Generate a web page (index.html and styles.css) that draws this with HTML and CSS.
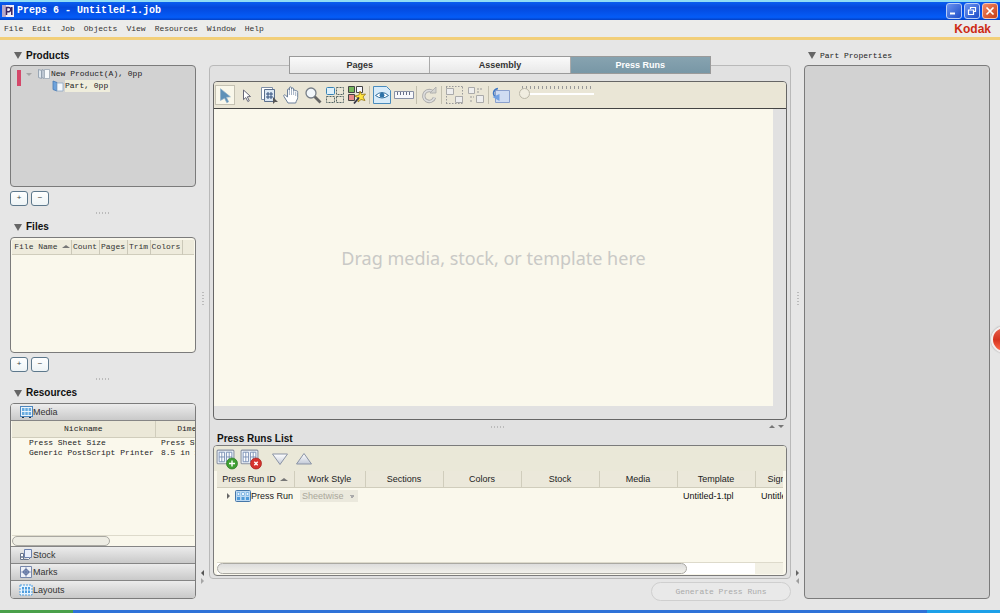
FILE: index.html
```html
<!DOCTYPE html>
<html lang="en">
<head>
<meta charset="utf-8">
<title>Preps 6 - Untitled-1.job</title>
<link rel="stylesheet" href="styles.css">
</head>
<body>
<svg class="defs" aria-hidden="true">
  <defs>
    <linearGradient id="fade" x1="0" y1="0" x2="0" y2="1"><stop offset="0" stop-color="#fff"/><stop offset="1" stop-color="#c3cad8"/></linearGradient>
    <symbol id="sheet" viewBox="0 0 18 16"><rect x="1" y="1" width="16" height="13" rx="1" fill="#e8eef6" stroke="#8a93a3"/><path d="M3 3h5v9H3zM10 3h5v9h-5z" fill="#fff" stroke="#6f87b0" stroke-width=".8"/><path d="M5.500 3v9M12.500 3v9M3 7.500h5M10 7.500h5" stroke="#6f87b0" stroke-width=".8"/></symbol>
    <symbol id="grid" viewBox="0 0 16 12"><rect x=".5" y=".5" width="15" height="11" rx="1" fill="#bcd9f2" stroke="#4677a8"/><path d="M2 2.500h3v3H2zM6.500 2.500h3v3h-3zM11 2.500h3v3h-3zM2 7h3v3H2zM6.500 7h3v3h-3zM11 7h3v3h-3z" fill="#4f9ad8"/><path d="M2.500 3h2v2h-2zM7 3h2v2H7zM11.500 3h2v2h-2z" fill="#eaf5ff"/></symbol>
  </defs>
</svg>
<div class="app">
  <header class="titlebar">
    <svg class="logo" viewBox="0 0 12 12"><rect width="12" height="12" fill="#f4eef8"/><path d="M0 0h4v12H0z" fill="#b9a9c9"/><path d="M4.500 10V2.500h2.200a2 2 0 0 1 0 4.200H5M9.800 2v8" fill="none" stroke="#3a2462" stroke-width="1.500"/></svg>
    <h1 class="title">Preps 6 - Untitled-1.job</h1>
    <div class="winbtns">
      <button class="win" aria-label="Minimize"><svg viewBox="0 0 14 14"><path d="M3 9.500h5" stroke="#fff" stroke-width="2"/></svg></button>
      <button class="win" aria-label="Restore"><svg viewBox="0 0 14 14"><path d="M5.500 5V3.500h5v4H9M3.500 6h5v4.500h-5z" fill="none" stroke="#fff" stroke-width="1.200"/></svg></button>
      <button class="win close" aria-label="Close"><svg viewBox="0 0 14 14"><path d="M3.500 3.500l7 7M10.500 3.500l-7 7" stroke="#fff" stroke-width="1.700"/></svg></button>
    </div>
  </header>
  <nav class="menubar">
    <button>File</button><button>Edit</button><button>Job</button><button>Objects</button><button>View</button><button>Resources</button><button>Window</button><button>Help</button>
    <strong class="brand">Kodak</strong>
  </nav>

  <main class="workspace">
    <aside class="left">
      <h2 class="head">Products</h2>
      <section class="panel gray products">
        <ul class="tree">
          <li><span class="mark"></span><i class="tri down"></i><svg class="i12" viewBox="0 0 14 12"><path d="M1.500 1.500l3 1v8l-3-1zM5 1.500l2 1v8l-2-1z" fill="#dfe7ee" stroke="#8998a8" stroke-width=".8"/><path d="M7.500 1.500h5v9h-5z" fill="#f6f9fb" stroke="#9aa7b5" stroke-width=".8"/></svg>New Product(A), 0pp</li>
          <li class="part"><svg class="i12" viewBox="0 0 14 12"><path d="M2 1l4 1.500V11L2 9.500z" fill="#6ea3dc" stroke="#4579b5" stroke-width=".8"/><path d="M6 3h6v8H6z" fill="#f3f7fc" stroke="#8ea7c2" stroke-width=".8"/></svg><span>Part, 0pp</span></li>
        </ul>
      </section>
      <div class="pm"><button aria-label="Add product">+</button><button aria-label="Remove product">−</button></div>
      <div class="dots"></div>

      <h2 class="head">Files</h2>
      <section class="panel files">
        <table class="filetable">
          <thead><tr><th class="c1">File Name <i class="tri up"></i></th><th>Count</th><th>Pages</th><th>Trim</th><th>Colors</th><th class="rest"></th></tr></thead>
        </table>
      </section>
      <div class="pm"><button aria-label="Add file">+</button><button aria-label="Remove file">−</button></div>
      <div class="dots"></div>

      <h2 class="head">Resources</h2>
      <section class="panel resources">
        <button class="acc"><svg class="i12" viewBox="0 0 14 12"><rect x="1.500" y=".5" width="12" height="10" fill="#eaf4fc" stroke="#4e86bd"/><path d="M3 2h2.500v3H3zM6.300 2h2.500v3H6.300zM9.600 2h2.500v3H9.600zM3 6h2.500v3H3zM6.300 6h2.500v3H6.300zM9.600 6h2.500v3H9.600z" fill="#67abe0"/><path d="M3 11.500h2M10 11.500h2" stroke="#234"/></svg>Media</button>
        <div class="media">
          <table class="mediatable">
            <thead><tr><th>Nickname</th><th>Dimensions</th></tr></thead>
            <tbody><tr><td>Press Sheet Size</td><td>Press Sheet</td></tr><tr><td>Generic PostScript Printer</td><td>8.5 in x 11 in</td></tr></tbody>
          </table>
          <div class="hscroll small"><span></span></div>
        </div>
        <button class="acc"><svg class="i12" viewBox="0 0 14 12"><path d="M5.500.5h7v8h-7z" fill="#e9eefa" stroke="#6a80ae"/><path d="M1.500 4.500h3v6h-3zM4.500 10.500h5l2-2" fill="#fff" stroke="#68748c"/><circle cx="3" cy="8" r="1" fill="#68748c"/></svg>Stock</button>
        <button class="acc"><svg class="i12" viewBox="0 0 14 12"><path d="M1.500.5h11v11h-11z" fill="#eef1f8" stroke="#7787ab"/><circle cx="7" cy="6" r="2.500" fill="#a6b4d2" stroke="#5a6e9d"/><path d="M7 1.500v9M2.500 6h9" stroke="#5a6e9d"/></svg>Marks</button>
        <button class="acc"><svg class="i12" viewBox="0 0 14 12"><rect x="1" y="1" width="12" height="10" fill="#e6f4ff" stroke="#4e9dde" stroke-dasharray="2 1"/><path d="M3 3h2v2.500H3zM6 3h2v2.500H6zM9 3h2v2.500H9zM3 6.500h2V9H3zM6 6.500h2V9H6zM9 6.500h2V9H9z" fill="#4e9dde"/></svg>Layouts</button>
      </section>
    </aside>

    <div class="gutter"><i class="vdots"></i><span class="arrows"><i class="tri l"></i><i class="tri r pale"></i></span></div>

    <div class="center">
      <div class="tabs" role="tablist">
        <button role="tab">Pages</button><button role="tab">Assembly</button><button role="tab" aria-selected="true" class="on">Press Runs</button>
      </div>
      <div class="frame">
        <section class="panel editor">
          <div class="toolbar">
            <button class="on" aria-label="Select"><svg viewBox="0 0 20 20"><path d="M5 3l11 9-4.500.5 2.500 5-2 1-2.500-5L5 16z" fill="#5f91b8" stroke="#8fb0c8" stroke-width=".8"/></svg></button>
            <button aria-label="Direct select"><svg viewBox="0 0 20 20"><path d="M6.500 5l7 6.500-3.200.3 2 4-1.500.7-2-4-2.300 2.200z" fill="#fff" stroke="#667" /></svg></button>
            <button aria-label="Number pages"><svg viewBox="0 0 20 20"><path d="M2.500 2.500h11v12h-11z" fill="#fff" stroke="#7f8fa6"/><path d="M5.500 4.500h10v12h-10z" fill="#dce8f4" stroke="#5b6f8c"/><path d="M9 7v7M12 7v7M7 9h7M7 12h7" stroke="#35507c"/><path d="M14 12l5 5-3 0-2 2z" fill="#555"/></svg></button>
            <button aria-label="Pan"><svg viewBox="0 0 20 20"><path d="M7 18L3 11.500c-1-1.600.8-2.300 1.700-1L6.500 12V5c0-1.500 1.900-1.500 1.900 0V3c0-1.500 2.100-1.500 2.100 0v1c0-1.500 2.100-1.500 2.100 0v2c0-1.500 2.100-1.200 2.100 0 1.800-.8 2 .5 2 1.500v5c0 2-1.500 3-2 5.500z" fill="#fff" stroke="#6b7f99"/><path d="M8.400 5v5M10.500 4v6M12.600 5v5M14.700 7v4" stroke="#8fa0b6" stroke-width=".8"/></svg></button>
            <button aria-label="Zoom"><svg viewBox="0 0 20 20"><path d="M11.500 11.500l6 6" stroke="#666" stroke-width="2.800"/><circle cx="8" cy="8" r="5" fill="#f2f7fb" stroke="#777f88" stroke-width="1.300"/></svg></button>
            <button aria-label="Layout"><svg viewBox="0 0 20 20"><rect x="1.500" y="2.500" width="8" height="7" rx="1" fill="#def0fa" stroke="#3783b5"/><path d="M11.500 2.500h7v7h-7zM1.500 11.500h8v6h-8zM11.500 11.500h7v6h-7z" fill="none" stroke="#566" stroke-dasharray="2 1"/></svg></button>
            <button aria-label="Auto layout"><svg viewBox="0 0 20 20"><path d="M1.500 1.500h6v6h-6z" fill="#75b85d" stroke="#444"/><path d="M9.500 1.500h6v6h-6z" fill="#f7f7ff" stroke="#444"/><path d="M1.500 9.500h6v6h-6z" fill="#e98989" stroke="#444"/><path d="M13 6l1.500 3.500 4-.5-2.500 3 2 3.500-4-1L11 17l.3-4L8 11l4-1z" fill="#ffe43e" stroke="#937514" stroke-width=".8"/><path d="M12 12.500l-5 6" stroke="#334" stroke-width="1.800"/></svg></button>
            <i class="sep"></i>
            <button class="eye" aria-label="Preview"><svg viewBox="0 0 20 20"><path d="M1.500 1.500h13l4 4v13h-17z" fill="#d8ecfa" stroke="#4a8cbd"/><path d="M3.500 10.500q6.500-6 13 0-6.500 5-13 0z" fill="#fff" stroke="#31709f"/><circle cx="10" cy="10.200" r="2.400" fill="#2c72a8"/></svg></button>
            <button aria-label="Measure"><svg viewBox="0 0 20 20"><path d="M.5 6.500h19v7H.5z" fill="#f7f8fb" stroke="#8890a5"/><path d="M3.500 7v3M6.500 7v3M9.500 7v3M12.500 7v3M15.500 7v3" stroke="#666f88"/></svg></button>
            <i class="sep"></i>
            <button aria-label="Rotate"><svg viewBox="0 0 20 20"><path d="M14.500 7.500a5.500 5.500 0 1 0 1 5" fill="none" stroke="#aaa" stroke-width="3.400"/><path d="M14.500 7.500a5.500 5.500 0 1 0 1 5" fill="none" stroke="#dedede" stroke-width="1.600"/><path d="M11 8h6V2z" fill="#d4d4d0" stroke="#aaa" stroke-width=".8"/></svg></button>
            <i class="sep"></i>
            <button aria-label="Group"><svg viewBox="0 0 20 20"><path d="M2 1.500h17M2 18.500h17M2.500 2v16M18.500 2v16" stroke="#999" stroke-dasharray="1.500 1.500"/><path d="M2.500 3.500h7v6h-7zM11.500 11.500h7v6h-7z" fill="#eee" stroke="#aaa"/></svg></button>
            <button aria-label="Ungroup"><svg viewBox="0 0 20 20"><path d="M2.500 2.500h6v6h-6zM10.500 10.500h7v7h-7z" fill="#eee" stroke="#aaa"/><path d="M11 4h5M11 7h3M4 12h4M4 16h3" stroke="#999" stroke-dasharray="2 1"/></svg></button>
            <i class="sep"></i>
            <button aria-label="Turn sheet"><svg viewBox="0 0 20 20"><path d="M4.500 5.500h14v12h-14z" fill="#cfdcf2" stroke="#8aa0cc"/><path d="M7 3.500c-5 1-6 6-2 9" fill="none" stroke="#3f77c4" stroke-width="1.500"/><path d="M1.500 12l7 4V9z" fill="#72a1e2"/></svg></button>
            <span class="zoom"><input type="range" min="0" max="100" value="0" aria-label="Zoom level"></span>
          </div>
          <div class="stage"><div class="canvas">Drag media, stock, or template here</div></div>
        </section>
        <div class="split"><span></span><i class="dots"></i><span class="ud"><i class="tri up"></i><i class="tri down"></i></span></div>
        <h2 class="listhead">Press Runs List</h2>
        <section class="panel runs">
          <div class="runbar">
            <button aria-label="Add press run"><svg viewBox="0 0 22 22"><use href="#sheet" width="19" height="17" y="1"/><circle cx="16" cy="15.500" r="5.500" fill="#3f9f32" stroke="#2d7924" stroke-width=".7"/><path d="M16 12.500v6M13 15.500h6" stroke="#fff" stroke-width="1.400"/></svg></button>
            <button aria-label="Delete press run"><svg viewBox="0 0 22 22"><use href="#sheet" width="19" height="17" y="1"/><circle cx="16" cy="15.500" r="5.500" fill="#d6332e" stroke="#a21f1c" stroke-width=".7"/><path d="M14.300 13.800l3.400 3.400M17.700 13.800l-3.400 3.400" stroke="#fff" stroke-width="1.400"/></svg></button>
            <button class="mv" aria-label="Move down"><svg viewBox="0 0 22 22"><path d="M3.500 6h15L11 16.500z" fill="url(#fade)" stroke="#8a93a5"/></svg></button>
            <button aria-label="Move up"><svg viewBox="0 0 22 22"><path d="M3.500 16h15L11 5.500z" fill="url(#fade)" stroke="#8a93a5"/></svg></button>
          </div>
          <div class="runwrap">
            <table class="runtable">
              <thead><tr><th class="id">Press Run ID <i class="tri up"></i></th><th class="ws">Work Style</th><th>Sections</th><th>Colors</th><th>Stock</th><th>Media</th><th>Template</th><th class="sig">Signatures</th></tr></thead>
              <tbody><tr><td><div class="run"><i class="tri r"></i><svg class="i16" viewBox="0 0 16 12"><use href="#grid"/></svg>Press Run</div></td><td class="l"><select disabled aria-label="Work style"><option>Sheetwise</option></select></td><td></td><td></td><td></td><td></td><td class="l">Untitled-1.tpl</td><td class="l">Untitled-1.tpl</td></tr></tbody>
            </table>
          </div>
          <div class="hscroll"><span></span><b></b></div>
        </section>
      </div>
      <button class="generate" disabled>Generate Press Runs</button>
    </div>

    <div class="gutter"><i class="vdots"></i><span class="arrows"><i class="tri r"></i><i class="tri l pale"></i></span></div>

    <aside class="right">
      <h2 class="head plain">Part Properties</h2>
      <section class="panel gray props"></section>
    </aside>
  </main>
  <footer class="taskbar"><i class="start"></i><i class="tray"></i></footer>
  <div class="orb"></div>
</div>
</body>
</html>
```
FILE: styles.css
```css
* { box-sizing: border-box; }
body { margin: 0; overflow: hidden; font: 9px/12px "Liberation Sans", Arial, sans-serif; color: #222; }
button, input, select { font: inherit; color: inherit; margin: 0; padding: 0; border: 0; background: none; }
button svg { display: block; width: 100%; height: 100%; }
h1, h2, ul { margin: 0; padding: 0; list-style: none; }
table { border-collapse: collapse; table-layout: fixed; }
th, td { padding: 0; font-weight: normal; white-space: nowrap; overflow: hidden; }
.defs { position: absolute; width: 0; height: 0; }
.app { position: relative; height: 100vh; display: flex; flex-direction: column; background: #e6e6e6; overflow: hidden; }

.titlebar { display: flex; align-items: center; height: 20px; padding: 0 2px; border-top: 2px solid #8fdcf5; background: linear-gradient(#0a5ef0, #0448dc 30%, #045cf8 85%, #0340c4); }
.logo { width: 12px; height: 12px; }
.title { margin-left: 3px; font: bold 10px/16px "Liberation Mono", monospace; color: #fff; }
.winbtns { display: flex; gap: 2px; margin-left: auto; }
.win { width: 16px; height: 16px; border: 1px solid #b9cdf5; border-radius: 3px; background: linear-gradient(135deg, #6b94f0, #1c4cc8); }
.win.close { border-color: #f3c5b5; background: linear-gradient(135deg, #f08a68, #c93c14); }

.menubar { display: flex; align-items: center; gap: 9px; height: 20px; padding: 0 9px 0 4px; border-bottom: 3px solid #f2cf79; background: #ececea; font: 8px/14px "Liberation Mono", monospace; color: #333; }
.brand { margin-left: auto; font: bold 12px/14px "Liberation Sans", Arial, sans-serif; color: #cc2a14; }

.workspace { flex: 1; min-height: 0; display: flex; padding: 6px 10px 11px; }
.left, .right { flex: 0 0 186px; min-width: 0; display: flex; flex-direction: column; }
.center { flex: 1; min-width: 0; display: flex; flex-direction: column; padding-top: 10px; }
.head { display: flex; align-items: center; height: 19px; flex: none; padding-left: 4px; font-size: 10px; color: #111; }
.head::before { content: ""; margin-right: 4px; border: 4px solid transparent; border-top: 7px solid #666; border-bottom: 0; }
.head.plain { font: 8px/14px "Liberation Mono", monospace; color: #222; }
.panel { border: 1px solid #7b7b7b; border-radius: 4px; background: #faf8ec; overflow: hidden; min-height: 0; }
.gray { background: #d2d2d2; }
.products { flex: 119 1 0; }
.files { flex: 109 1 0; padding: 2px 1px; }
.resources { flex: 193 1 0; display: flex; flex-direction: column; }
.props { flex: 1; }

.tri { display: inline-block; border: 3px solid transparent; }
.tri.up { border-top: 0; border-bottom: 3px solid #777; border-left-width: 4px; border-right-width: 4px; margin: 0 0 1px 2px; }
.tri.down { border-bottom: 0; border-top-color: #777; }
.tri.l { border-left: 0; border-right-color: #555; }
.tri.r { border-right: 0; border-left-color: #666; }
.tri.pale { opacity: .5; }

.tree { padding: 2px 6px; font: 8px/12px "Liberation Mono", monospace; }
.tree li { display: flex; align-items: center; height: 12px; }
.mark { align-self: flex-start; width: 4px; height: 16px; margin: 2px 5px 0 0; background: #d4486a; }
.tree .tri { margin-right: 5px; opacity: .5; }
.i12 { width: 14px; height: 12px; flex: none; }
.i16 { width: 16px; height: 12px; flex: none; }
.tree .part { padding-left: 34px; }
.part span { padding-right: 2px; background: #efeddc; }

.pm { display: flex; gap: 3px; padding-top: 4px; flex: none; }
.pm button { width: 18px; height: 15px; border: 1px solid #5d788c; border-radius: 3px; background: linear-gradient(#fff, #eef4f6); font-size: 8px; line-height: 12px; color: #444; }
.dots { flex: none; width: 15px; height: 2px; background: repeating-linear-gradient(90deg, #bbb 0 1px, transparent 1px 3px); }
.left > .dots { align-self: center; margin: 6px 0 4px; }

.filetable { width: 100%; background: #eeebdc; border-bottom: 1px solid #d0cdbc; font: 8px/14px "Liberation Mono", monospace; color: #333; }
.filetable th { width: 28px; border-right: 1px solid #cbc8b8; text-align: center; }
.filetable .c1 { width: 59px; padding-left: 2px; }
.filetable .c1 .tri { margin-left: 0; }
.filetable th:nth-child(4) { width: 23px; }
.filetable th:nth-child(5) { width: 32px; }
.filetable .rest { width: auto; border: 0; }

.acc { display: flex; align-items: center; flex: none; height: 17px; padding-left: 8px; border-bottom: 1px solid #858585; background: linear-gradient(#ececec, #c9c9c9); color: #333; }
.acc svg { display: block; width: 14px; height: 12px; }
.acc:last-child { border-bottom: 0; }
.media { flex: 1; min-height: 0; display: flex; flex-direction: column; padding: 0 1px; border-bottom: 1px solid #858585; overflow: hidden; }
.mediatable { width: 236px; font: 8px/10px "Liberation Mono", monospace; color: #222; }
.mediatable th { height: 17px; background: #ebe8d8; border-right: 1px solid #d0cdbc; border-bottom: 1px solid #d0cdbc; }
.mediatable th:first-child { width: 143px; }
.mediatable td { padding-left: 6px; }
.mediatable td:first-child { padding-left: 17px; }
.hscroll { display: flex; flex: none; margin-top: auto; height: 12px; border-top: 1px solid #dddacb; background: #fff; }
.hscroll span { width: 83%; border: 1px solid #aaa9a2; border-radius: 6px; background: linear-gradient(#ddd, #f2f1ea); }
.hscroll b { margin-left: auto; width: 5%; background: #f2f0e4; }
.hscroll.small { height: 11px; background: #faf8ec; }
.hscroll.small span { width: 54%; background: #eeede4; }

.gutter { flex: 0 0 13px; display: flex; flex-direction: column; align-items: center; justify-content: flex-end; }
.vdots { width: 2px; height: 15px; margin-bottom: 263px; background: repeating-linear-gradient(#bbb 0 1px, transparent 1px 3px); }
.arrows { display: flex; flex-direction: column; gap: 2px; margin-bottom: 15px; }
.arrows .tri { border-top-width: 3px; border-bottom-width: 3px; }

.tabs { position: relative; display: flex; align-self: center; width: 422px; height: 18px; flex: none; margin-bottom: -9px; border: 1px solid #9a9a9a; font-weight: bold; color: #333; background: #f0f0f0; }
.tabs button { flex: 1; border-right: 1px solid #aaa; background: linear-gradient(#fafafa, #e8e8e8); font-weight: bold; }
.tabs .on { border: 0; background: linear-gradient(#87a3b0, #7897a6); color: #fff; }
.frame { flex: 1; min-height: 0; display: flex; flex-direction: column; padding: 15px 3px 2px; border: 1px solid #b9b9b9; border-radius: 4px; background: #e1e1e1; }
.editor { flex: 337 1 0; display: flex; flex-direction: column; background: #e1e1e1; border-color: #666; }
.toolbar { display: flex; align-items: center; gap: 2px; flex: none; height: 27px; padding-left: 1px; border-bottom: 1px solid #444; background: #eae6d6; }
.toolbar button { width: 20px; height: 20px; }
.toolbar .on { border: 1px solid #c4c1b2; background: #f9f7ea; }
.sep { width: 1px; height: 18px; background: #c2bfae; }
.zoom { display: block; width: 75px; padding-top: 2px; margin: -6px 0 0 6px; background: repeating-linear-gradient(90deg, #999 0 1px, transparent 1px 4px) 3px 0 / 69px 3px no-repeat; }
.zoom input { display: block; appearance: none; width: 100%; height: 11px; background: linear-gradient(#fff, #fff) 0 5px / 100% 2px no-repeat; }
.zoom input::-webkit-slider-thumb { appearance: none; width: 11px; height: 11px; border: 1px solid #bbb8a8; border-radius: 50%; background: #f0ede0; }
.stage { flex: 1; min-height: 0; display: flex; padding: 0 13px 13px 0; }
.canvas { flex: 1; display: flex; align-items: center; justify-content: center; background: #faf8ec; font: 18px/24px "Noto Sans", sans-serif; color: #c9c9c6; }
.split { display: grid; grid-template-columns: 1fr auto 1fr; align-items: center; height: 13px; flex: none; padding-right: 3px; }
.ud { display: flex; justify-content: flex-end; gap: 3px; }
.ud .tri { margin: 0; border-left-width: 3px; border-right-width: 3px; }
.listhead { height: 12px; flex: none; padding-left: 4px; font-size: 10px; line-height: 12px; color: #111; }
.runs { flex: 128 1 0; display: flex; flex-direction: column; padding-bottom: 1px; }
.runbar { display: flex; align-items: center; gap: 2px; flex: none; height: 25px; padding-left: 2px; background: #eae8d8; }
.runbar button { width: 22px; height: 22px; }
.runbar .mv { margin-left: 5px; }
.runwrap { flex: 1; min-height: 0; margin: 0 3px; overflow: hidden; }
.runtable { width: 616px; }
.runtable th { width: 78px; height: 16px; background: #ebe8da; border-right: 1px solid #d0cdbc; border-bottom: 1px solid #d0cdbc; color: #222; }
.runtable .id { width: 77px; }
.runtable .ws { width: 71px; }
.runtable .sig { padding-left: 12px; text-align: left; }
.runtable td { height: 17px; }
.runtable .l { padding-left: 6px; color: #111; }
.run { display: flex; align-items: center; padding-left: 10px; }
.run .tri { margin-right: 5px; }
.runtable select { display: block; width: 58px; height: 12px; opacity: 1; padding-left: 2px; appearance: none; line-height: 12px; color: #aaa79b; background: linear-gradient(45deg, transparent 50%, #aaa 50%) 49px 5px / 3px 3px no-repeat, linear-gradient(-45deg, transparent 50%, #aaa 50%) 52px 5px / 3px 3px no-repeat, #ebe9dd; }
.runs .hscroll { margin: 0 3px; }
.generate { align-self: flex-end; flex: none; width: 140px; height: 19px; margin: 3px 0 -2px; border: 1px solid #cfcfcf; border-radius: 10px; background: #e9e9e9; font: 8px/16px "Liberation Mono", monospace; color: #aaa; }

.taskbar { display: flex; justify-content: space-between; flex: none; height: 3px; background: #2f72d8; }
.start { width: 73px; background: #4aa04a; }
.tray { width: 73px; background: #1ca0e8; }
.orb { position: absolute; right: -18px; top: 326px; width: 27px; height: 27px; border: 2px solid #f4eeee; border-radius: 50%; background: linear-gradient(#e8604c, #d63420 50%, #ff6a4a); box-shadow: 0 0 2px #888; }
```
